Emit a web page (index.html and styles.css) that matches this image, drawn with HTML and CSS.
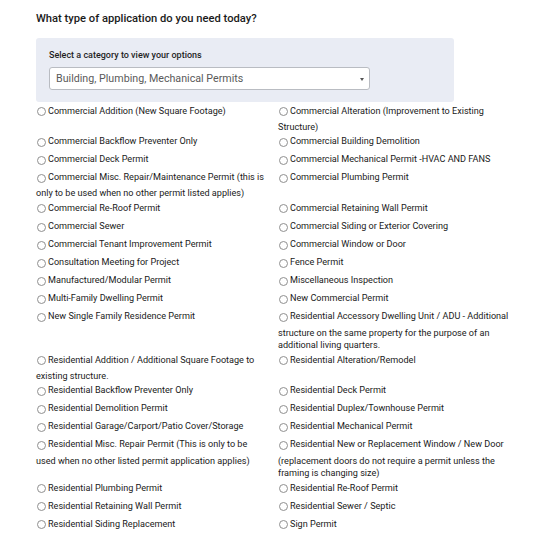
FILE: index.html
```html
<!DOCTYPE html>
<html>
<head>
<meta charset="utf-8">
<link rel="stylesheet" href="styles.css">
</head>
<body>
<div class="page">
  <h1 class="title">What type of application do you need today?</h1>
  <div class="panel">
    <div class="panel-label">Select a category to view your options</div>
    <div class="select">
      <span class="select-text">Building, Plumbing, Mechanical Permits</span>
      <span class="caret"></span>
    </div>
  </div>
  <div class="options">
    <div class="opt"><span class="radio"></span>Commercial Addition (New Square Footage)</div>
    <div class="opt"><span class="radio"></span>Commercial Alteration (Improvement to Existing Structure)</div>
    <div class="opt"><span class="radio"></span>Commercial Backflow Preventer Only</div>
    <div class="opt"><span class="radio"></span>Commercial Building Demolition</div>
    <div class="opt"><span class="radio"></span>Commercial Deck Permit</div>
    <div class="opt"><span class="radio"></span>Commercial Mechanical Permit -HVAC AND FANS</div>
    <div class="opt"><span class="radio"></span>Commercial Misc. Repair/Maintenance Permit (this is only to be used when no other permit listed applies)</div>
    <div class="opt"><span class="radio"></span>Commercial Plumbing Permit</div>
    <div class="opt"><span class="radio"></span>Commercial Re-Roof Permit</div>
    <div class="opt"><span class="radio"></span>Commercial Retaining Wall Permit</div>
    <div class="opt"><span class="radio"></span>Commercial Sewer</div>
    <div class="opt"><span class="radio"></span>Commercial Siding or Exterior Covering</div>
    <div class="opt"><span class="radio"></span>Commercial Tenant Improvement Permit</div>
    <div class="opt"><span class="radio"></span>Commercial Window or Door</div>
    <div class="opt"><span class="radio"></span>Consultation Meeting for Project</div>
    <div class="opt"><span class="radio"></span>Fence Permit</div>
    <div class="opt"><span class="radio"></span>Manufactured/Modular Permit</div>
    <div class="opt"><span class="radio"></span>Miscellaneous Inspection</div>
    <div class="opt"><span class="radio"></span>Multi-Family Dwelling Permit</div>
    <div class="opt"><span class="radio"></span>New Commercial Permit</div>
    <div class="opt"><span class="radio"></span>New Single Family Residence Permit</div>
    <div class="opt"><span class="radio"></span>Residential Accessory Dwelling Unit / ADU - Additional structure on the same property for the purpose of an additional living quarters.</div>
    <div class="opt"><span class="radio"></span>Residential Addition / Additional Square Footage to existing structure.</div>
    <div class="opt"><span class="radio"></span>Residential Alteration/Remodel</div>
    <div class="opt"><span class="radio"></span>Residential Backflow Preventer Only</div>
    <div class="opt"><span class="radio"></span>Residential Deck Permit</div>
    <div class="opt"><span class="radio"></span>Residential Demolition Permit</div>
    <div class="opt"><span class="radio"></span>Residential Duplex/Townhouse Permit</div>
    <div class="opt"><span class="radio"></span>Residential Garage/Carport/Patio Cover/Storage</div>
    <div class="opt"><span class="radio"></span>Residential Mechanical Permit</div>
    <div class="opt"><span class="radio"></span>Residential Misc. Repair Permit (This is only to be used when no other listed permit application applies)</div>
    <div class="opt"><span class="radio"></span>Residential New or Replacement Window / New Door (replacement doors do not require a permit unless the framing is changing size)</div>
    <div class="opt"><span class="radio"></span>Residential Plumbing Permit</div>
    <div class="opt"><span class="radio"></span>Residential Re-Roof Permit</div>
    <div class="opt"><span class="radio"></span>Residential Retaining Wall Permit</div>
    <div class="opt"><span class="radio"></span>Residential Sewer / Septic</div>
    <div class="opt"><span class="radio"></span>Residential Siding Replacement</div>
    <div class="opt"><span class="radio"></span>Sign Permit</div>
  </div>
</div>
</body>
</html>
```
FILE: styles.css
```css
html, body {
  margin: 0;
  padding: 0;
  background: #ffffff;
}
.page {
  padding: 11px 0 0 36px;
  font-family: Roboto, "Liberation Sans", sans-serif;
  color: #222;
}
.title {
  margin: 0;
  font-size: 11.2px;
  line-height: 16px;
  font-weight: 500;
  color: #1a1a1a;
}
.panel {
  margin-top: 11px;
  width: 392px;
  padding: 11px 13px 12px 13px;
  background: #e9ecf4;
  border-radius: 3px;
}
.panel-label {
  font-size: 9px;
  line-height: 12px;
  font-weight: 500;
  color: #1f1f1f;
}
.select {
  margin-top: 6px;
  height: 21px;
  background: #fff;
  border: 1px solid #b9bcc2;
  border-radius: 3px;
  display: flex;
  align-items: center;
  justify-content: space-between;
  padding: 0 5px 0 6px;
  box-sizing: content-box;
  width: 308px;
}
.select-text {
  font-size: 10.7px;
  color: #5a5a5a;
}
.caret {
  width: 0;
  height: 0;
  border-left: 2.5px solid transparent;
  border-right: 2.5px solid transparent;
  border-top: 3px solid #555;
  margin-top: 1px;
}
.options {
  display: grid;
  grid-template-columns: 232px 232px;
  column-gap: 10px;
  width: 474px;
  margin-top: 0.5px;
}
.opt {
  font-size: 9.1px;
  line-height: 12.5px;
  color: #1a1a1a;
}
.radio {
  display: inline-block;
  width: 7px;
  height: 7px;
  border: 1px solid #8f8f8f;
  border-radius: 50%;
  background: #fff;
  vertical-align: middle;
  margin: 4.55px 2px 4.55px 1px;
}
```
